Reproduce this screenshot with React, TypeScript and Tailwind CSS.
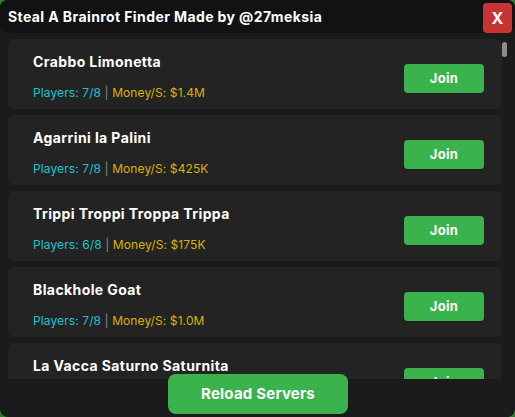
import React from "react";

const servers = [
  { name: "Crabbo Limonetta", players: "7/8", money: "$1.4M" },
  { name: "Agarrini la Palini", players: "7/8", money: "$425K" },
  { name: "Trippi Troppi Troppa Trippa", players: "6/8", money: "$175K" },
  { name: "Blackhole Goat", players: "7/8", money: "$1.0M" },
  { name: "La Vacca Saturno Saturnita", players: "7/8", money: "$900K" },
];

export default function App() {
  return (
    <div
      className="w-[515px] h-[417px] bg-[#2f7a31] overflow-hidden"
      style={{ fontFamily: "Inter, 'Noto Sans', sans-serif" }}
    >
      <div className="relative w-full h-full bg-[#1b1b1b] rounded-[8px] flex flex-col overflow-hidden">
        <div className="h-[33px] bg-[#121212] rounded-b-[8px] flex items-center pl-[8px] shrink-0">
          <span className="text-white font-bold text-[14px] tracking-[0.4px]">
            Steal A Brainrot Finder Made by @27meksia
          </span>
        </div>
        <button className="absolute top-[3px] right-[3px] w-[29px] h-[30px] rounded-[4px] bg-[#c83434] text-white font-bold text-[16px] flex items-center justify-center">
          X
        </button>
        <div className="relative overflow-hidden mt-[6px] h-[340px] flex-none">
          <div className="flex flex-col gap-[6px] pl-[8px] pr-[13px]">
            {servers.map((s) => (
              <div
                key={s.name}
                className="h-[70px] shrink-0 bg-[#232323] rounded-[6px] flex items-start justify-between pl-[25px] pr-[18px]"
              >
                <div className="flex flex-col pt-[15px] gap-[16px]">
                  <div className="text-white font-bold text-[14px] leading-[16px] tracking-[0.4px]">
                    {s.name}
                  </div>
                  <div className="text-[12px] leading-[14px] tracking-[0.1px]">
                    <span className="text-[#1cc3d4]">Players: {s.players}</span>
                    <span className="text-[#8a8a8a]"> | </span>
                    <span className="text-[#d8b400]">Money/S: {s.money}</span>
                  </div>
                </div>
                <button className="mt-[25px] w-[80px] h-[29px] rounded-[4px] bg-[#3bb34d] text-white font-bold text-[13px] tracking-[0.3px]">
                  Join
                </button>
              </div>
            ))}
          </div>
          <div className="absolute right-[8px] top-[3px] w-[5px] h-[15px] rounded-full bg-[#8c8c8c]" />
        </div>
        <button className="absolute left-[168px] top-[374px] w-[180px] h-[40px] rounded-[8px] bg-[#3bb34d] text-white font-bold text-[15px] tracking-[0.2px]">
          Reload Servers
        </button>
      </div>
    </div>
  );
}
